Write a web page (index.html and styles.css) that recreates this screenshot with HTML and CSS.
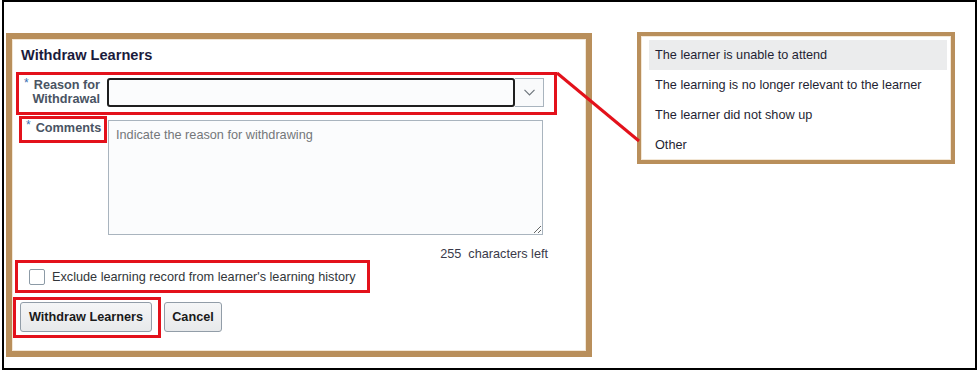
FILE: index.html
```html
<!DOCTYPE html>
<html lang="en">
<head>
    <meta charset="UTF-8">
    <meta name="viewport" content="width=device-width, initial-scale=1.0">
    <title>Withdraw Learners</title>
    <link rel="stylesheet" href="styles.css">
</head>
<body>
    <div class="frame">

        <div class="withdraw-panel">
            <h2 class="title">Withdraw Learners</h2>

            <div class="mark row-reason">
                <label class="field-label">
                    <span class="req">*</span>
                    <span class="label-text">Reason for Withdrawal</span>
                </label>
                <div class="select">
                    <div class="select-input"></div>
                    <div class="select-btn">
                        <svg width="11" height="7" viewBox="0 0 11 7"><polyline points="0.5,0.8 5.5,5.8 10.5,0.8" fill="none" stroke="#6f767d" stroke-width="1.2"/></svg>
                    </div>
                </div>
            </div>

            <div class="row-comments">
                <div class="mark comments-mark">
                    <span class="req">*</span>
                    <span class="label-text">Comments</span>
                </div>
                <textarea class="comments" placeholder="Indicate the reason for withdrawing"></textarea>
            </div>

            <div class="char-count"><span class="count">255</span><span>characters left</span></div>

            <div class="mark row-exclude">
                <span class="checkbox"></span>
                <span>Exclude learning record from learner's learning history</span>
            </div>

            <div class="row-buttons">
                <div class="mark button-mark">
                    <button class="btn">Withdraw Learners</button>
                </div>
                <button class="btn btn-cancel">Cancel</button>
            </div>
        </div>

        <div class="options-panel">
            <div class="option is-active">The learner is unable to attend</div>
            <div class="option">The learning is no longer relevant to the learner</div>
            <div class="option">The learner did not show up</div>
            <div class="option">Other</div>
        </div>

        <!-- callout line from the select to the option list -->
        <svg class="callout" width="971" height="366">
            <line x1="553" y1="71" x2="635" y2="139" stroke="#e3111b" stroke-width="3"/>
        </svg>
    </div>
</body>
</html>
```

FILE: styles.css
```css
body{
    margin: 0;
    font-family: "Liberation Sans", Arial, sans-serif;
    font-size: 12.7px;
    color: #32363a;
    background: #fff;
}
.frame{
    position: relative;
    display: flex;
    align-items: flex-start;
    gap: 45px;
    box-sizing: border-box;
    width: 975px;
    height: 370px;
    margin-left: 2px;
    padding: 31px 0 0 2px;
    border: 2px solid #000;
}
.withdraw-panel{
    box-sizing: border-box;
    width: 586px;
    height: 324px;
    border: 6px solid #b98f5b;
    box-shadow: inset 0 0 0 1px #f3e7d6;
}
.title{
    margin: 0 0 8px 0;
    padding: 7px 0 0 9px;
    font-size: 14.6px;
    line-height: 18px;
    font-weight: bold;
    color: #1b1b3c;
}

.mark{
    box-sizing: border-box;
    border: 3px solid #e3111b;
}
.req{
    color: #3a6fb3;
    font-size: 12px;
    line-height: 10px;
}
.label-text{
    font-weight: bold;
    color: #4a5463;
    line-height: 14px;
}

.row-reason{
    display: flex;
    align-items: flex-start;
    width: 541px;
    height: 43px;
    margin-left: 4px;
    padding-top: 3px;
}
.field-label{
    display: flex;
    box-sizing: border-box;
    width: 81px;
    padding: 0 0 0 5px;
}
.field-label .label-text{
    flex: 1;
    text-align: right;
}
.select{
    display: flex;
    width: 437px;
    height: 29px;
    margin-left: 7px;
}
.select-input{
    flex: 1;
    border: 2px solid #1f1f1f;
    border-radius: 3px;
    background: #fbfcfd;
}
.select-btn{
    display: flex;
    align-items: center;
    justify-content: center;
    box-sizing: border-box;
    width: 29px;
    border: 1px solid #a9b4be;
    border-left: none;
    background: #f9fafb;
}

.row-comments{
    display: flex;
    align-items: flex-start;
    margin: 1px 0 0 7px;
}
.comments-mark{
    display: flex;
    width: 88px;
    height: 27px;
    padding: 1px 0 0 4px;
}
.comments-mark .label-text{
    margin: 1px 0 0 5px;
}
.comments{
    box-sizing: border-box;
    width: 435px;
    height: 115px;
    margin: 4px 0 0 1px;
    padding: 7px 7px;
    border: 1px solid #a9b4be;
    border-radius: 0;
    background: #fbfcfd;
    font-family: "Liberation Sans", Arial, sans-serif;
    font-size: 12.7px;
    line-height: 14px;
    color: #32363a;
}
.comments::placeholder{
    color: #74777a;
}

.char-count{
    width: 536px;
    margin-top: 12px;
    text-align: right;
    line-height: 14px;
    color: #3a3a4a;
}
.count{
    margin-right: 7px;
}

.row-exclude{
    display: flex;
    align-items: center;
    gap: 7px;
    width: 355px;
    height: 33px;
    margin: -1px 0 0 3px;
    padding-left: 11px;
}
.checkbox{
    box-sizing: border-box;
    width: 16px;
    height: 16px;
    border: 1px solid #8c9aa6;
    border-radius: 2px;
    background: #fff;
}

.row-buttons{
    display: flex;
    align-items: flex-start;
    margin: 4px 0 0 1px;
}
.button-mark{
    width: 148px;
    height: 41px;
    padding: 2px 0 0 4px;
}
.btn{
    box-sizing: border-box;
    height: 30px;
    padding: 0;
    border: 1px solid #929da8;
    border-radius: 3px;
    background: linear-gradient(#f5f6f7, #e7e9eb);
    font-family: "Liberation Sans", Arial, sans-serif;
    font-size: 12.7px;
    font-weight: bold;
    color: #1a1a1a;
    white-space: nowrap;
}
.button-mark .btn{
    width: 132px;
}
.btn-cancel{
    width: 58px;
    margin: 5px 0 0 3px;
}

.options-panel{
    box-sizing: border-box;
    width: 318px;
    height: 132px;
    margin-top: -1px;
    padding: 4px 4px 0 8px;
    border: 4px solid #b98f5b;
    box-shadow: inset 0 0 0 1px #f3e7d6;
}
.option{
    height: 30px;
    line-height: 30px;
    padding: 0 6px;
    color: #1f1f33;
}
.option.is-active{
    background: #ebeced;
}

.callout{
    position: absolute;
    left: 0;
    top: 0;
    pointer-events: none;
}
```
